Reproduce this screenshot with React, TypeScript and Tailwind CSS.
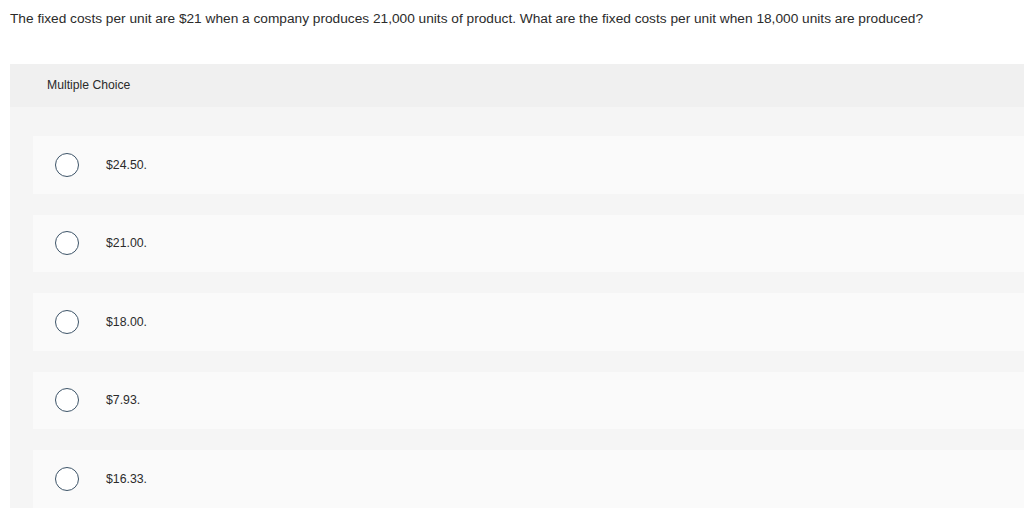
const options = ["$24.50.", "$21.00.", "$18.00.", "$7.93.", "$16.33."];

export default function App() {
  return (
    <div className="w-[1024px] h-[512px] overflow-hidden bg-white text-[#2b2b2b] font-['Liberation_Sans',Arial,sans-serif]">
      <p className="pl-[10px] pt-[10px] text-[13.7px] leading-[18px]">
        The fixed costs per unit are $21 when a company produces 21,000 units of product. What are the fixed costs per unit when 18,000 units are produced?
      </p>

      <div className="ml-[10px] mt-[36px] bg-[#f5f5f5]">
        <div className="h-[43px] bg-[#f0f0f0] pl-[37px] flex items-center text-[12.2px]">
          Multiple Choice
        </div>
        <div className="pt-[29px] pl-[23px] flex flex-col gap-[21px]">
          {options.map((opt) => (
            <div key={opt} className="h-[57.5px] bg-[#fafafa] flex items-center pl-[22px]">
              <span className="w-[24px] h-[24px] rounded-full border border-[#3d5468] bg-white shrink-0" />
              <span className="ml-[27px] text-[12.3px]">{opt}</span>
            </div>
          ))}
        </div>
      </div>
    </div>
  );
}
